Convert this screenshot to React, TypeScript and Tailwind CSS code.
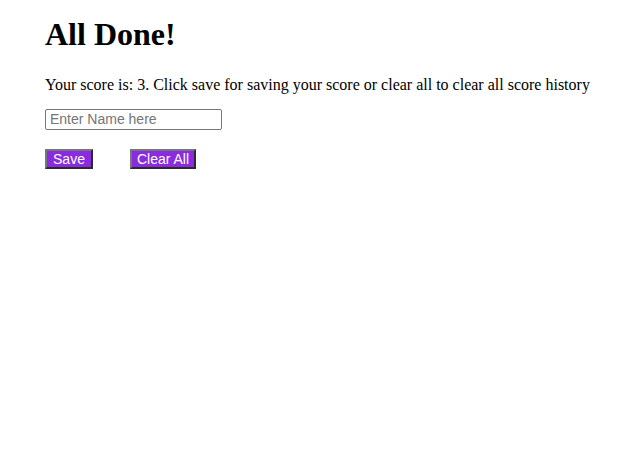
import React from 'react';

export default function App() {
  return (
    <div className="min-h-screen bg-white text-black pl-[45px] pt-[16px]">
      <h1 className="text-[32px] font-bold leading-[37px] font-['Liberation_Serif',serif]">All Done!</h1>
      <p className="mt-[23px] text-[16px] leading-[18px] font-['Liberation_Serif',serif]">
        Your score is: 3. Click save for saving your score or clear all to clear all score history
      </p>
      <input
        type="text"
        placeholder="Enter Name here"
        className="mt-[15px] block w-[177px] h-[21px] border border-[#767676] rounded-[2px] px-[4px] text-[14px] font-['Liberation_Sans',sans-serif] placeholder:text-[#757575] outline-none"
      />
      <div className="mt-[19px] flex gap-[37px]">
        <button className="w-[48px] h-[20px] bg-[#8a2be2] text-white text-[14px] leading-[15px] font-['Liberation_Sans',sans-serif] border-2 border-t-[#767676] border-l-[#767676] border-b-[#2b2b2b] border-r-[#2b2b2b]">
          Save
        </button>
        <button className="w-[66px] h-[20px] bg-[#8a2be2] text-white text-[14px] leading-[15px] font-['Liberation_Sans',sans-serif] border-2 border-t-[#767676] border-l-[#767676] border-b-[#2b2b2b] border-r-[#2b2b2b]">
          Clear All
        </button>
      </div>
    </div>
  );
}
